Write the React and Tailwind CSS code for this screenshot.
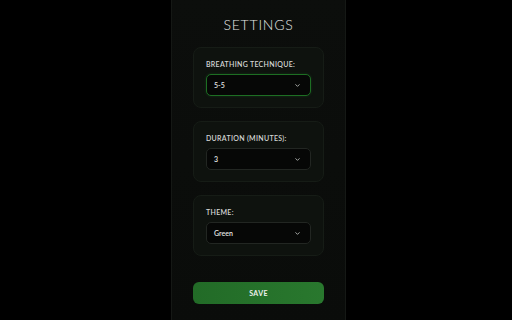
import React from "react";

function Chevron() {
  return (
    <svg width="7" height="7" viewBox="0 0 24 24" fill="none" stroke="#b8bcb8" strokeWidth="3" strokeLinecap="round" strokeLinejoin="round">
      <path d="M6 9l6 6 6-6" />
    </svg>
  );
}

function Field({ label, value, active }) {
  return (
    <div className="rounded-[8px] bg-[#0e120e] border border-[#161c16] px-[12px] pt-[12px] pb-[11px]">
      <div className="text-[7px] leading-[9px] font-semibold tracking-[0.3px] text-[#d4d6d4] uppercase mb-[5px]">{label}</div>
      <div
        className={
          "h-[22px] rounded-[5px] bg-[#060706] flex items-center justify-between pl-[7px] pr-[9px] border " +
          (active ? "border-[#1d6e23] shadow-[0_0_3px_rgba(40,140,50,0.25)]" : "border-[#222622]")
        }
      >
        <span className="text-[7px] font-semibold text-[#e4e6e4]">{value}</span>
        <Chevron />
      </div>
    </div>
  );
}

export default function App() {
  return (
    <div className="w-[512px] h-[320px] bg-black overflow-hidden" style={{ fontFamily: '"Lato", "Liberation Sans", sans-serif' }}>
      <div className="ml-[171px] w-[175px] h-[340px] -mt-[10px] rounded-[10px] border border-[#151815] bg-gradient-to-b from-[#0c0e0c] to-[#0a0c0a] px-[21px] pt-[25px] flex flex-col">
        <div className="text-center text-[14px] leading-[18px] font-light tracking-[0.8px] text-[#e4e6e4]" style={{ fontFamily: '"Lato", sans-serif' }}>SETTINGS</div>
        <div className="mt-[13px] flex flex-col gap-[13px]">
          <Field label="Breathing Technique:" value="5-5" active />
          <Field label="Duration (minutes):" value="3" />
          <Field label="Theme:" value="Green" />
        </div>
        <button className="mt-[26px] h-[22px] rounded-[6px] bg-gradient-to-r from-[#226b27] to-[#29782e] text-[7px] font-bold tracking-[0.4px] text-[#eef2ee]">SAVE</button>
      </div>
    </div>
  );
}
